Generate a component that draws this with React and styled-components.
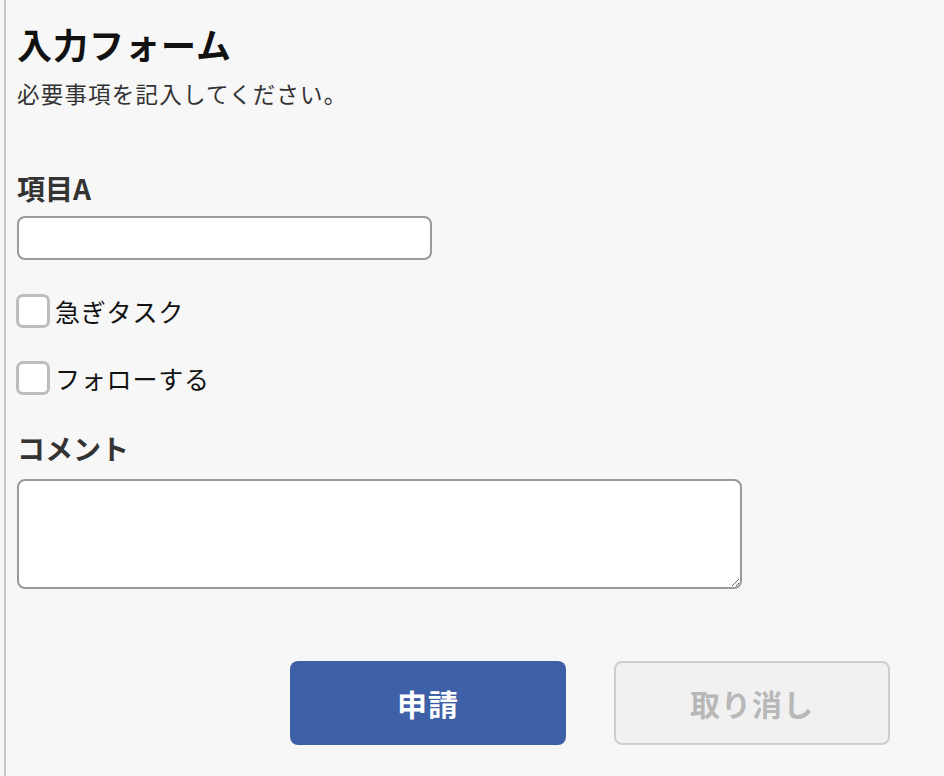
import React from "react";
import styled, { createGlobalStyle } from "styled-components";

const GlobalStyle = createGlobalStyle`
  html, body {
    margin: 0;
    padding: 0;
    background: #f7f7f7;
  }
  body {
    font-family: "Noto Sans CJK JP", "Noto Sans", sans-serif;
    color: #333;
  }
`;

const Page = styled.div`
  min-height: 100vh;
  box-sizing: border-box;
  margin-left: 4px;
  border-left: 2px solid #c6c6c6;
  padding: 23px 0 0 11px;
  display: flex;
  flex-flow: column;
  align-items: flex-start;
`;

const Title = styled.h1`
  margin: 0;
  font-size: 35px;
  line-height: 42px;
  font-weight: 700;
  letter-spacing: 1px;
  color: #111;
`;

const Lead = styled.p`
  margin: 13px 0 0 0;
  font-size: 22.5px;
  line-height: 30px;
  letter-spacing: 1.2px;
  color: #333;
`;

const FieldLabel = styled.label`
  display: block;
  margin-top: ${({ $gap }) => $gap}px;
  font-size: 28px;
  line-height: 32px;
  font-weight: 700;
  color: #333;
`;

const TextInput = styled.input`
  display: block;
  box-sizing: border-box;
  margin-top: 12px;
  width: 415px;
  height: 44px;
  border: 2px solid #9a9a9a;
  border-radius: 8px;
  background: #fff;
  font-size: 20px;
  padding: 0 10px;
  outline: none;
`;

const CheckRow = styled.label`
  display: flex;
  align-items: center;
  margin-top: ${({ $gap }) => $gap}px;
  margin-left: -1px;
  height: 34px;
  font-size: 25px;
  letter-spacing: 0.8px;
  color: #111;
  cursor: pointer;
`;

const Box = styled.input.attrs({ type: "checkbox" })`
  appearance: none;
  -webkit-appearance: none;
  margin: 0 5px 0 0;
  width: 34px;
  height: 34px;
  box-sizing: border-box;
  border: 3px solid #bdbdbd;
  border-radius: 7px;
  background: #fff;
  cursor: pointer;
`;

const Comment = styled.textarea`
  display: block;
  box-sizing: border-box;
  margin-top: 15px;
  width: 725px;
  height: 110px;
  border: 2px solid #9a9a9a;
  border-radius: 8px;
  background: #fff;
  font-size: 20px;
  padding: 8px 10px;
  outline: none;
`;

const Buttons = styled.div`
  display: flex;
  gap: 48px;
  margin: 72px 0 0 273px;
`;

const Button = styled.button`
  width: 276px;
  height: 84px;
  box-sizing: border-box;
  border-radius: 8px;
  font-family: inherit;
  font-size: 30px;
  font-weight: 700;
  letter-spacing: 1px;
  cursor: pointer;
  border: ${({ $primary }) => ($primary ? "none" : "2px solid #cfcfcf")};
  background: ${({ $primary }) => ($primary ? "#3e60a6" : "#f1f1f1")};
  color: ${({ $primary }) => ($primary ? "#fff" : "#b8b8b8")};
`;

export default function App() {
  return (
    <>
      <GlobalStyle />
      <Page>
        <Title>入力フォーム</Title>
        <Lead>必要事項を記入してください。</Lead>

        <FieldLabel $gap={64} htmlFor="itemA">項目A</FieldLabel>
        <TextInput id="itemA" type="text" />

        <CheckRow $gap={34}>
          <Box />
          急ぎタスク
        </CheckRow>
        <CheckRow $gap={33}>
          <Box />
          フォローする
        </CheckRow>

        <FieldLabel $gap={37} htmlFor="comment">コメント</FieldLabel>
        <Comment id="comment" />

        <Buttons>
          <Button $primary>申請</Button>
          <Button disabled>取り消し</Button>
        </Buttons>
      </Page>
    </>
  );
}
